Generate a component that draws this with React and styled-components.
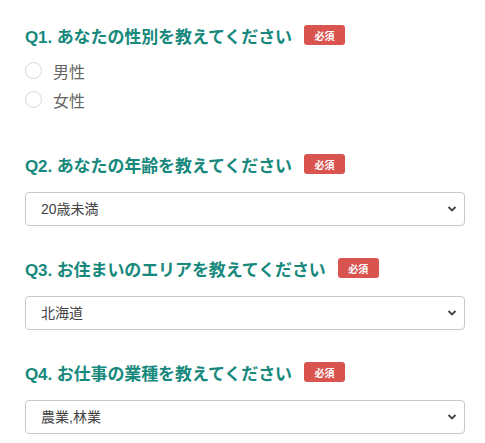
import React from 'react'
import styled, { createGlobalStyle } from 'styled-components'

const GlobalStyle = createGlobalStyle`
  html, body {
    margin: 0;
    padding: 0;
    background: #fff;
  }
  body {
    font-family: "Liberation Sans", "Noto Sans CJK JP", sans-serif;
  }
`

const Form = styled.form`
  display: flex;
  flex-direction: column;
  padding: 23px 20px 0 25px;
`

const Section = styled.div`
  display: flex;
  flex-direction: column;
  margin-bottom: ${({ gap }) => gap || '30px'};
`

const Heading = styled.div`
  display: flex;
  align-items: center;
  height: 24px;
  margin-bottom: ${({ tight }) => (tight ? '9px' : '16px')};
`

const Title = styled.span`
  font-size: 17px;
  font-weight: bold;
  color: #17897c;
  letter-spacing: -0.1px;
`

const Badge = styled.span`
  display: inline-flex;
  align-items: center;
  justify-content: center;
  width: 41px;
  height: 20px;
  margin-left: 12px;
  border-radius: 3px;
  background: #d9534f;
  color: #fff;
  font-size: 10px;
  font-weight: bold;
`

const RadioRow = styled.label`
  display: flex;
  align-items: center;
  gap: 11px;
  height: 29px;
  font-size: 16px;
  color: #666;
`

const RadioCircle = styled.span`
  width: 15px;
  height: 15px;
  border: 1px solid #d6d6d6;
  border-radius: 50%;
  background: #fff;
`

const SelectWrap = styled.div`
  position: relative;
  width: 100%;
`

const Select = styled.select`
  appearance: none;
  width: 100%;
  height: 34px;
  padding: 0 30px 0 15px;
  border: 1px solid #c8c8c8;
  border-radius: 4px;
  background: #fff;
  color: #444;
  font-family: "Liberation Sans", "Noto Sans CJK JP", sans-serif;
  font-size: 14px;
`

const Chevron = styled.svg`
  position: absolute;
  right: 8px;
  top: 13px;
  pointer-events: none;
`

const Dropdown = ({ value }) => (
  <SelectWrap>
    <Select defaultValue={value}>
      <option>{value}</option>
    </Select>
    <Chevron width="10" height="8" viewBox="0 0 10 8">
      <path d="M1.5 2 L5 5.5 L8.5 2" fill="none" stroke="#444" strokeWidth="1.8" />
    </Chevron>
  </SelectWrap>
)

const Question = ({ title, children, tight, gap }) => (
  <Section gap={gap}>
    <Heading tight={tight}>
      <Title>{title}</Title>
      <Badge>必須</Badge>
    </Heading>
    {children}
  </Section>
)

export default function App() {
  return (
    <>
      <GlobalStyle />
      <Form>
        <Question title="Q1. あなたの性別を教えてください" tight gap="38px">
          <RadioRow>
            <RadioCircle />
            男性
          </RadioRow>
          <RadioRow>
            <RadioCircle />
            女性
          </RadioRow>
        </Question>
        <Question title="Q2. あなたの年齢を教えてください">
          <Dropdown value="20歳未満" />
        </Question>
        <Question title="Q3. お住まいのエリアを教えてください">
          <Dropdown value="北海道" />
        </Question>
        <Question title="Q4. お仕事の業種を教えてください">
          <Dropdown value="農業,林業" />
        </Question>
      </Form>
    </>
  )
}
